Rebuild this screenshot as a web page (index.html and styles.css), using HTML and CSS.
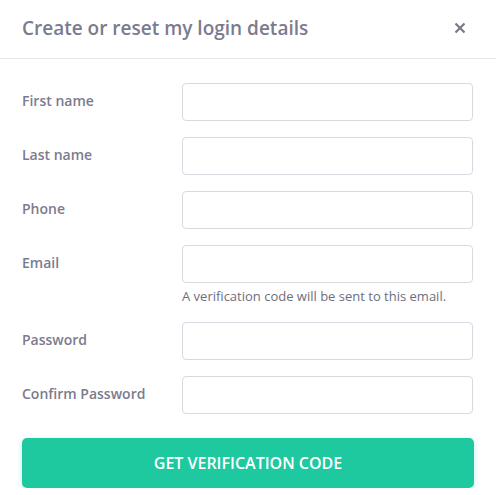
FILE: index.html
```html
<!DOCTYPE html>
<html>
<head>
<meta charset="utf-8">
<link rel="stylesheet" href="styles.css">
</head>
<body>
<div class="modal">
  <div class="modal-header">
    <h2 class="modal-title">Create or reset my login details</h2>
    <button class="close" aria-label="Close">
      <svg width="12" height="12" viewBox="0 0 12 12"><path d="M1.5 1.5 L10.5 10.5 M10.5 1.5 L1.5 10.5" stroke="#7a7a85" stroke-width="2.2" stroke-linecap="butt"/></svg>
    </button>
  </div>
  <form class="modal-body">
    <div class="row">
      <label class="label">First name</label>
      <div class="field"><input class="input" type="text"></div>
    </div>
    <div class="row">
      <label class="label">Last name</label>
      <div class="field"><input class="input" type="text"></div>
    </div>
    <div class="row">
      <label class="label">Phone</label>
      <div class="field"><input class="input" type="text"></div>
    </div>
    <div class="row">
      <label class="label">Email</label>
      <div class="field"><input class="input" type="text"><p class="hint">A verification code will be sent to this email.</p></div>
    </div>
    <div class="row">
      <label class="label">Password</label>
      <div class="field"><input class="input" type="password"></div>
    </div>
    <div class="row">
      <label class="label">Confirm Password</label>
      <div class="field"><input class="input" type="password"></div>
    </div>
    <button type="button" class="submit">GET VERIFICATION CODE</button>
  </form>
</div>
</body>
</html>
```
FILE: styles.css
```css
* { box-sizing: border-box; }
html, body { margin: 0; padding: 0; background: #fff; }
body { font-family: "Open Sans", "Liberation Sans", sans-serif; }
.modal { width: 496px; }
.modal-header {
  height: 59px;
  border-bottom: 1px solid #e4e4ea;
  display: flex;
  align-items: center;
  justify-content: space-between;
  padding: 0 30px 0 22px;
}
.modal-title {
  margin: 0;
  font-size: 19px;
  font-weight: 600;
  color: #7b7b90;
  line-height: 28px;
  padding-bottom: 2px;
}
.close {
  border: 0;
  background: none;
  padding: 0;
  width: 12px;
  height: 12px;
  display: flex;
  margin-bottom: 2px;
}
.modal-body {
  padding: 24px 23px 0 22px;
  display: flex;
  flex-direction: column;
  gap: 16px;
}
.row {
  display: grid;
  grid-template-columns: 160px 1fr;
}
.label {
  font-size: 14px;
  font-weight: 600;
  color: #7b7b8e;
  line-height: 36px;
}
.input {
  display: block;
  width: 100%;
  height: 38px;
  border: 1px solid #d9d9e2;
  border-radius: 4px;
  background: #fff;
  outline: none;
}
.hint {
  margin: 4px 0 0;
  font-size: 13px;
  line-height: 19px;
  color: #6e6e7c;
}
.submit {
  margin-top: 8px;
  width: 452px;
  height: 50px;
  border: 0;
  border-radius: 5px;
  background: #1fc99f;
  color: #fff;
  font-family: "Open Sans", "Liberation Sans", sans-serif;
  font-size: 16px;
  font-weight: 600;
  box-shadow: 0 2px 6px rgba(31, 201, 159, 0.25);
}
```
